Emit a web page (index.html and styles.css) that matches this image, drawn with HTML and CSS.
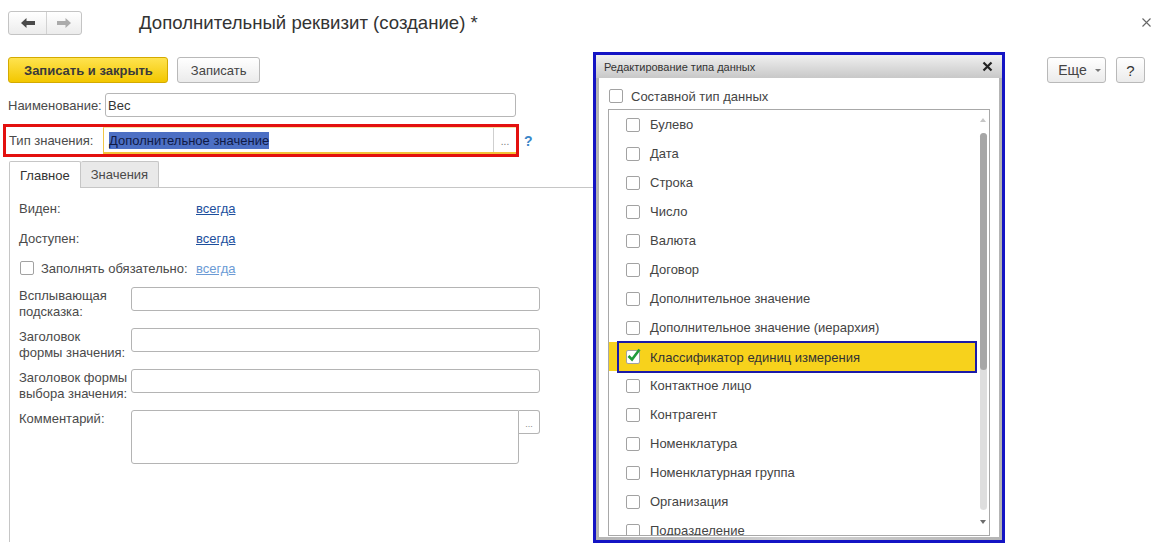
FILE: index.html
```html
<!DOCTYPE html>
<html lang="ru">
<head>
    <meta charset="UTF-8">
    <title>Дополнительный реквизит (создание)</title>
    <link rel="stylesheet" href="styles.css">
</head>
<body>
    <div class="head">
        <div class="nav">
            <span class="nav-btn"><svg width="14" height="10" viewBox="0 0 14 10"><path d="M0 5 L5.5 0 L5.5 3 L14 3 L14 7 L5.5 7 L5.5 10 Z" fill="#4a4a4a"/></svg></span>
            <span class="nav-btn"><svg width="14" height="10" viewBox="0 0 14 10"><path d="M14 5 L8.5 0 L8.5 3 L0 3 L0 7 L8.5 7 L8.5 10 Z" fill="#ababab"/></svg></span>
        </div>
        <h1 class="title">Дополнительный реквизит (создание) *</h1>
        <span class="close"><svg width="9" height="9" viewBox="0 0 9 9"><path d="M0.5 0.5 L8.5 8.5 M8.5 0.5 L0.5 8.5" stroke="#666" stroke-width="1.1"/></svg></span>
    </div>

    <div class="toolbar">
        <button class="btn btn-main">Записать и закрыть</button>
        <button class="btn">Записать</button>
        <div class="spacer"></div>
        <button class="btn btn-more">Еще <span class="caret"></span></button>
        <button class="btn btn-help">?</button>
    </div>

    <div class="name-row">
        <label class="name-lbl">Наименование:</label>
        <div class="input">Вес</div>
    </div>

    <div class="type-row">
        <div class="type-box">
            <label class="type-lbl">Тип значения:</label>
            <div class="input-focus">
                <span class="selected">Дополнительное значение</span>
                <span class="dots">...</span>
            </div>
        </div>
        <span class="hint">?</span>
    </div>

    <div class="tabs">
        <div class="tab active">Главное</div>
        <div class="tab">Значения</div>
    </div>

    <div class="panel">
        <div class="prow">
            <span class="plbl">Виден:</span>
            <a class="link">всегда</a>
        </div>
        <div class="prow">
            <span class="plbl">Доступен:</span>
            <a class="link">всегда</a>
        </div>
        <div class="prow">
            <span class="plbl"><span class="chk"></span>Заполнять обязательно:</span>
            <a class="link light">всегда</a>
        </div>
        <div class="irow first">
            <span class="ilbl">Всплывающая<br>подсказка:</span>
            <div class="box"></div>
        </div>
        <div class="irow">
            <span class="ilbl">Заголовок<br>формы значения:</span>
            <div class="box"></div>
        </div>
        <div class="irow">
            <span class="ilbl">Заголовок формы<br>выбора значения:</span>
            <div class="box"></div>
        </div>
        <div class="irow">
            <span class="ilbl">Комментарий:</span>
            <div class="memo"></div>
            <div class="memo-btn">...</div>
        </div>
    </div>

    <div class="dialog">
        <div class="dlg-head">
            <span>Редактирование типа данных</span>
            <svg width="11" height="11" viewBox="0 0 11 11"><path d="M1.5 1.5 L9.5 9.5 M9.5 1.5 L1.5 9.5" stroke="#222" stroke-width="2.2"/></svg>
        </div>
        <div class="dlg-body">
            <div class="compound"><span class="chk"></span>Составной тип данных</div>
            <div class="list">
                <div class="items">
                    <div class="item"><span class="chk"></span>Булево</div>
                    <div class="item"><span class="chk"></span>Дата</div>
                    <div class="item"><span class="chk"></span>Строка</div>
                    <div class="item"><span class="chk"></span>Число</div>
                    <div class="item"><span class="chk"></span>Валюта</div>
                    <div class="item"><span class="chk"></span>Договор</div>
                    <div class="item"><span class="chk"></span>Дополнительное значение</div>
                    <div class="item"><span class="chk"></span>Дополнительное значение (иерархия)</div>
                    <div class="item on">
                        <div class="pick">
                            <span class="chk checked"><svg width="16" height="15" viewBox="0 0 16 15"><path d="M2.5 8 L6 11.5 L13.5 1.5" fill="none" stroke="#1f9b3c" stroke-width="2.6"/></svg></span>Классификатор единиц измерения
                        </div>
                    </div>
                    <div class="item"><span class="chk"></span>Контактное лицо</div>
                    <div class="item"><span class="chk"></span>Контрагент</div>
                    <div class="item"><span class="chk"></span>Номенклатура</div>
                    <div class="item"><span class="chk"></span>Номенклатурная группа</div>
                    <div class="item"><span class="chk"></span>Организация</div>
                    <div class="item"><span class="chk"></span>Подразделение</div>
                </div>
                <div class="scroll">
                    <span class="up"></span>
                    <div class="track"><div class="thumb"></div></div>
                    <span class="down"></span>
                </div>
            </div>
        </div>
    </div>
</body>
</html>
```

FILE: styles.css
```css
*{
    margin: 0;
    padding: 0;
    box-sizing: border-box;
}
body{
    width: 1161px;
    height: 543px;
    overflow: hidden;
    position: relative;
    background: #fff;
    font-family: "Liberation Sans", Arial, sans-serif;
    font-size: 13px;
    color: #4a4a4a;
}

/* шапка */
.head{
    display: flex;
    align-items: center;
    padding: 11px 10px 0 8px;
}
.nav{
    display: flex;
    height: 24px;
    border: 1px solid #c4c4c4;
    border-radius: 3px;
    background: linear-gradient(#fff, #ececec);
}
.nav-btn{
    width: 37px;
    display: flex;
    align-items: center;
    justify-content: center;
}
.nav-btn + .nav-btn{
    width: 35px;
    border-left: 1px solid #d2d2d2;
}
.title{
    margin-left: 57px;
    font-size: 18.6px;
    font-weight: normal;
    color: #333;
}
.close{
    margin-left: auto;
    align-self: flex-start;
    margin-top: 4px;
}

/* кнопки */
.toolbar{
    display: flex;
    gap: 9px;
    margin-top: 22px;
    padding: 0 16px 0 8px;
}
.btn{
    height: 26px;
    padding: 0 13px;
    border: 1px solid #b9b9b9;
    border-radius: 3px;
    background: linear-gradient(#fff, #ebebeb);
    font: inherit;
    color: #444;
}
.btn-main{
    padding: 0 14px 0 15px;
    background: linear-gradient(#ffe34f, #f3c700);
    border-color: #d4aa00;
    font-weight: bold;
    color: #3a3a3a;
}
.spacer{
    flex: 1;
}
.btn-more{
    width: 59px;
    padding: 0 0 0 6px;
    font-size: 14px;
    display: flex;
    align-items: center;
    justify-content: center;
    gap: 8px;
}
.caret{
    border-left: 3px solid transparent;
    border-right: 3px solid transparent;
    border-top: 3px solid #777;
}
.btn-help{
    width: 29px;
    padding: 0;
    margin-left: 1px;
    font-size: 15px;
    color: #333;
}

/* поля */
.name-row{
    display: flex;
    align-items: center;
    margin-top: 10px;
    padding-left: 8px;
}
.name-lbl{
    width: 97px;
}
.input{
    width: 411px;
    height: 24px;
    padding-left: 2px;
    border: 1px solid #b6b6b6;
    border-radius: 3px;
    display: flex;
    align-items: center;
    color: #333;
}
.type-row{
    display: flex;
    align-items: center;
    margin: 7px 0 0 3px;
}
.type-box{
    display: flex;
    align-items: center;
    width: 516px;
    height: 33px;
    padding-left: 3px;
    border: 3px solid #e3100f;
}
.type-lbl{
    width: 94px;
}
.input-focus{
    flex: 1;
    height: 27px;
    display: flex;
    align-items: center;
    padding-left: 5px;
    border-left: 1px solid #f1c646;
    border-top: 1px solid #f7e3a6;
    border-bottom: 2px solid #f3c23a;
}
.selected{
    background: #4c6fc4;
    color: #101a45;
    line-height: 17px;
}
.dots{
    margin-left: auto;
    width: 23px;
    align-self: stretch;
    border-left: 1px solid #cfcfcf;
    color: #777;
    font-size: 10px;
    display: flex;
    align-items: center;
    justify-content: center;
    padding-top: 3px;
}
.hint{
    margin-left: 5px;
    color: #3a86c8;
    font-size: 14px;
    font-weight: bold;
}

/* вкладки */
.tabs{
    display: flex;
    margin: 4px 0 0 9px;
}
.tab{
    height: 26px;
    padding: 0 10px;
    display: flex;
    align-items: center;
    background: #e9e9e9;
    border: 1px solid #c6c6c6;
    border-bottom: none;
    border-radius: 2px 2px 0 0;
}
.tab + .tab{
    border-left: none;
}
.tab.active{
    background: #fff;
    height: 27px;
    margin-bottom: -1px;
    position: relative;
    color: #333;
}
.panel{
    width: 640px;
    height: 355px;
    margin-left: 9px;
    padding: 5px 0 0 9px;
    border-top: 1px solid #c6c6c6;
    border-left: 1px solid #c6c6c6;
}
.prow{
    display: flex;
    align-items: center;
    height: 30px;
}
.plbl{
    width: 177px;
    display: flex;
    align-items: center;
}
.link{
    color: #1d4f9d;
    text-decoration: underline;
}
.link.light{
    color: #6c9bd5;
}
.chk{
    width: 14px;
    height: 14px;
    flex: none;
    border: 1px solid #a2a2a2;
    border-radius: 2px;
    background: #fff;
    margin: 0 7px 0 1px;
    position: relative;
}
.irow{
    display: flex;
    align-items: flex-start;
    margin-top: 8px;
}
.irow.first{
    margin-top: 4px;
}
.ilbl{
    width: 112px;
    line-height: 16px;
    padding-top: 1px;
}
.box{
    width: 409px;
    height: 24px;
    border: 1px solid #b4b4b4;
    border-radius: 3px;
}
.memo{
    width: 388px;
    height: 54px;
    border: 1px solid #b4b4b4;
    border-radius: 3px 0 3px 3px;
}
.memo-btn{
    width: 21px;
    height: 24px;
    border: 1px solid #b4b4b4;
    border-left: none;
    border-radius: 0 3px 3px 0;
    color: #888;
    font-size: 9px;
    display: flex;
    align-items: center;
    justify-content: center;
    padding-top: 3px;
}

/* окно выбора типа */
.dialog{
    position: absolute;
    left: 593px;
    top: 52px;
    width: 412px;
    height: 491px;
    border: 3px solid #1414c4;
    background: linear-gradient(90deg, #b4b4b4, #d2d2d2 50%, #b4b4b4);
    display: flex;
    flex-direction: column;
}
.dlg-head{
    height: 23px;
    padding: 0 9px 0 8px;
    display: flex;
    align-items: center;
    justify-content: space-between;
    background: linear-gradient(#f0f0f0, #c8c8c8);
    font-size: 11px;
    color: #333;
}
.dlg-body{
    flex: 1;
    min-height: 0;
    margin: 0 3px 3px;
    padding: 8px 9px 1px;
    background: #fff;
    display: flex;
    flex-direction: column;
}
.compound{
    display: flex;
    align-items: center;
    height: 20px;
    margin-bottom: 3px;
    color: #444;
}
.compound .chk{
    margin-right: 8px;
}
.list{
    flex: 1;
    min-height: 0;
    display: flex;
    overflow: hidden;
    border: 1px solid #a8a8a8;
}
.items{
    flex: 1;
}
.item{
    height: 29px;
    display: flex;
    align-items: center;
    padding-left: 16px;
    color: #444;
}
.item .chk{
    margin-right: 10px;
}
.item.on{
    background: #f7d21c;
    padding-left: 0;
    align-items: stretch;
}
.pick{
    flex: 1;
    margin: -1px 0 -2px 8px;
    padding-left: 6px;
    border: 2px solid #1a1aa8;
    display: flex;
    align-items: center;
    color: #333;
}
.chk svg{
    position: absolute;
    left: -1px;
    top: -3px;
}
.scroll{
    width: 12px;
    display: flex;
    flex-direction: column;
    align-items: center;
}
.up{
    margin-top: 8px;
    border-left: 3px solid transparent;
    border-right: 3px solid transparent;
    border-bottom: 4px solid #c6c6c6;
}
.track{
    width: 7px;
    height: 377px;
    margin-top: 11px;
    background: #dedede;
    border-radius: 4px;
}
.thumb{
    height: 237px;
    background: #a6a6a6;
    border-radius: 4px;
}
.down{
    margin-top: 10px;
    border-left: 3px solid transparent;
    border-right: 3px solid transparent;
    border-top: 4px solid #6c6c6c;
}
```
